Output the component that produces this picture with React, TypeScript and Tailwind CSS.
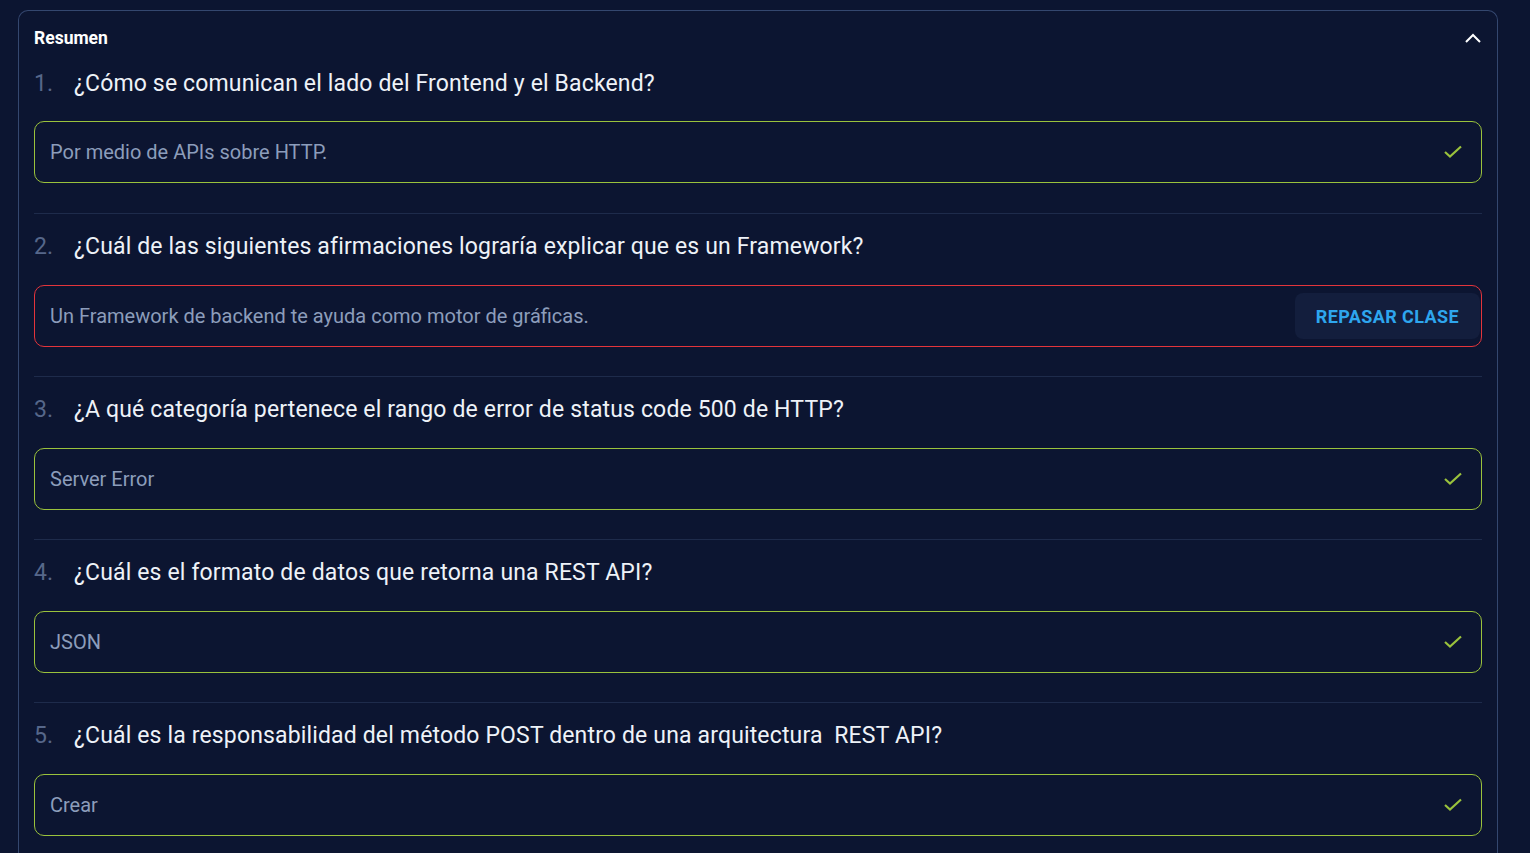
import React from 'react'

type Item = {
  question: string
  answer: string
  correct: boolean
}

const items: Item[] = [
  { question: '¿Cómo se comunican el lado del Frontend y el Backend?', answer: 'Por medio de APIs sobre HTTP.', correct: true },
  { question: '¿Cuál de las siguientes afirmaciones lograría explicar que es un Framework?', answer: 'Un Framework de backend te ayuda como motor de gráficas.', correct: false },
  { question: '¿A qué categoría pertenece el rango de error de status code 500 de HTTP?', answer: 'Server Error', correct: true },
  { question: '¿Cuál es el formato de datos que retorna una REST API?', answer: 'JSON', correct: true },
  { question: '¿Cuál es la responsabilidad del método POST dentro de una arquitectura\u00a0 REST API?', answer: 'Crear', correct: true },
]

const Check = () => (
  <svg width="20" height="16" viewBox="0 0 20 16" fill="none">
    <path d="M2 8 L7 12.5 L18 2.5" stroke="#9ac23c" strokeWidth="2.2" />
  </svg>
)

const ChevronUp = () => (
  <svg width="18" height="12" viewBox="0 0 18 12" fill="none">
    <path d="M2 10 L9 3 L16 10" stroke="#ffffff" strokeWidth="2" />
  </svg>
)

export default function App() {
  return (
    <div className="min-h-[853px] bg-[#0c1531] pt-[10px] pl-[18px] pr-[32px] font-['Roboto',sans-serif]">
      <div className="rounded-t-[10px] border border-b-0 border-[#34476f] px-[15px] pb-6">
        <div className="flex items-center justify-between pt-[15px]">
          <h2 className="text-[17.5px] leading-6 font-bold text-white">Resumen</h2>
          <ChevronUp />
        </div>

        <div className="mt-[18px] flex flex-col">
          {items.map((it, i) => (
            <div
              key={i}
              className={`flex flex-col ${i > 0 ? 'pt-[17px]' : ''} ${i === 0 ? 'pb-[30px]' : 'pb-[29px]'} ${
                i < items.length - 1 ? 'border-b border-[#1e2b4b]' : ''
              }`}
            >
              <div className="mt-[1px] flex items-center h-[30px] text-[23px] tracking-[0.15px]">
                <span className="w-[40px] text-[#56678a]">{i + 1}.</span>
                <span className="text-[#eef2f8]">{it.question}</span>
              </div>
              <div
                className={`${i === 0 ? 'mt-[22px]' : 'mt-[23px]'} flex h-[62px] items-center justify-between rounded-[10px] border pl-[15px] ${
                  it.correct ? 'border-[#9ac23c] pr-[18px]' : 'border-[#e3343b] pr-[1px]'
                }`}
              >
                <span className="text-[20px] text-[#8c9dbb]">{it.answer}</span>
                {it.correct ? (
                  <Check />
                ) : (
                  <button className="h-[46px] rounded-[8px] bg-[#131e3d] px-[21px] text-[18px] font-bold tracking-[0.4px] text-[#2ea6ee]">
                    REPASAR CLASE
                  </button>
                )}
              </div>
            </div>
          ))}
        </div>
      </div>
    </div>
  )
}
